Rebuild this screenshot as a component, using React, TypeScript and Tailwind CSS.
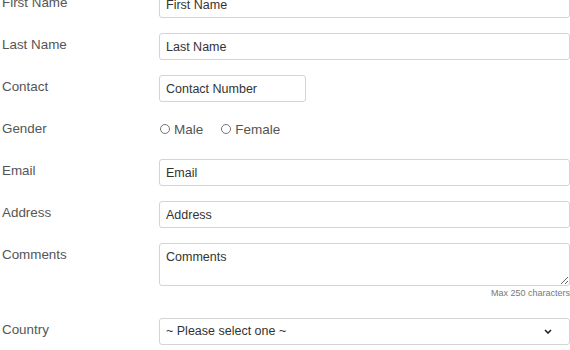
import React from "react";

const font = { fontFamily: '"Liberation Sans", Arial, sans-serif' };

const inputCls =
  "h-[27px] w-full rounded-[3px] border border-[#d4d4d4] bg-white px-[6px] text-[12.5px] text-[#333] placeholder:text-[#333] outline-none";

function Row({ label, children }: { label: string; children: React.ReactNode }) {
  return (
    <div className="flex items-start">
      <label className="w-[159px] shrink-0 pl-[2px] pt-[2px] text-[13.4px] leading-[20px] text-[#555]">
        {label}
      </label>
      <div className="min-w-0 flex-1">{children}</div>
    </div>
  );
}

function Radio({ label }: { label: string }) {
  return (
    <label className="flex items-center gap-[4px] text-[13.5px] leading-[16px] text-[#555]">
      <span className="block h-[10px] w-[10px] rounded-full border border-[#767676] bg-white" />
      <span className="pt-[1px]">{label}</span>
    </label>
  );
}

export default function App() {
  return (
    <div className="h-[350px] w-[570px] overflow-hidden bg-white" style={font}>
      <form className="-mt-[9px] flex flex-col gap-[15px]">
        <Row label="First Name">
          <input className={inputCls} placeholder="First Name" />
        </Row>
        <Row label="Last Name">
          <input className={inputCls} placeholder="Last Name" />
        </Row>
        <Row label="Contact">
          <input className={inputCls + " !w-[147px]"} placeholder="Contact Number" />
        </Row>
        <Row label="Gender">
          <div className="flex h-[27px] items-center gap-[18px] pb-[3px] pl-[1px]">
            <Radio label="Male" />
            <Radio label="Female" />
          </div>
        </Row>
        <Row label="Email">
          <input className={inputCls} placeholder="Email" />
        </Row>
        <Row label="Address">
          <input className={inputCls} placeholder="Address" />
        </Row>
        <Row label="Comments">
          <textarea
            className="block h-[43px] w-full rounded-[3px] border border-[#d4d4d4] bg-white px-[6px] py-[4px] text-[12.5px] leading-[18px] text-[#333] placeholder:text-[#333] outline-none"
            placeholder="Comments"
          />
          <div className="h-[17px] text-right text-[9px] leading-[14px] text-[#777]">
            Max 250 characters
          </div>
        </Row>
        <Row label="Country">
          <div className="relative">
            <select className="h-[27px] w-full appearance-none rounded-[3px] border border-[#d4d4d4] bg-white px-[6px] text-[12.5px] text-[#333] outline-none">
              <option>~ Please select one ~</option>
            </select>
            <svg
              className="pointer-events-none absolute right-[18px] top-[11px]"
              width="8"
              height="5"
              viewBox="0 0 8 5"
            >
              <path d="M1 1l3 3 3-3" fill="none" stroke="#222" strokeWidth="1.6" />
            </svg>
          </div>
        </Row>
      </form>
    </div>
  );
}
